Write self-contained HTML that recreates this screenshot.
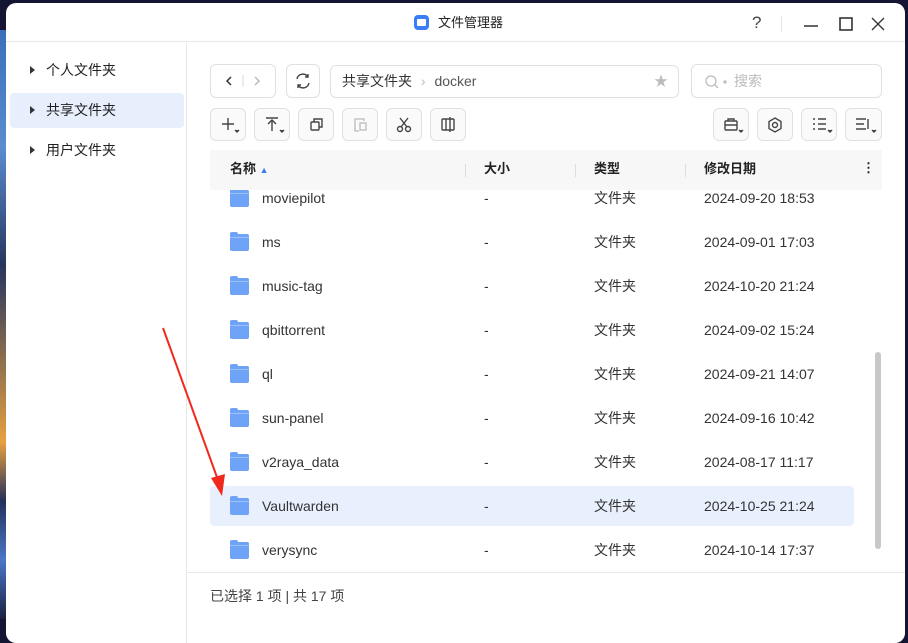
<!DOCTYPE html>
<html><head><meta charset="utf-8"><style>
*{box-sizing:border-box;margin:0;padding:0}
body{width:908px;height:619px;overflow:hidden;background:#141433;font-family:"Liberation Sans","Noto Sans CJK SC",sans-serif;position:relative}
.strip{position:absolute;left:0;top:30px;width:8px;height:589px;background:linear-gradient(#3a6fb8,#5a8ccf 20%,#27355e 40%,#e6a040 70%,#24305a 80%,#4a78c8 90%,#1a2040)}
.win{position:absolute;left:6px;top:3px;width:899px;height:640px;background:#fff;border-radius:10px;overflow:hidden}
.title{height:39px;border-bottom:1px solid #e8e8e8;position:relative}
.title .t{position:absolute;left:432px;top:12px;font-size:13px;line-height:16px;color:#222}
.title .ic{position:absolute;left:408px;top:12px;width:15px;height:15px;background:#3a7df5;border-radius:4px}
.title .ic:after{content:"";position:absolute;left:3px;top:4px;width:9px;height:7px;background:#fff;border-radius:1px}
.side{position:absolute;left:0;top:40px;width:181px;bottom:0;border-right:1px solid #e8e8e8}
.si{position:absolute;left:4px;width:174px;height:35px;font-size:14px;color:#222;padding-left:36px;line-height:35px;border-radius:4px}
.si:before{content:"";position:absolute;left:20px;top:13px;border-left:5px solid #333;border-top:4px solid transparent;border-bottom:4px solid transparent}
.btn{position:absolute;border:1px solid #e0e0e0;border-radius:6px;background:#fff;color:#555;font-size:14px;text-align:center}
.tb{background:#fafafa;width:36px;height:33px;top:105px}
.tb svg{position:absolute;left:0;top:0}
.hdr{position:absolute;left:204px;top:147px;width:672px;height:40px;background:#f7f7f8;font-size:13px;font-weight:bold;color:#222}
.hdr span{position:absolute;top:11px;line-height:16px}
.sep{position:absolute;top:14px;width:1px;height:13px;background:#ddd}
.row{position:absolute;left:204px;width:644px;height:40px;font-size:14px;color:#333}
.row span{position:absolute;top:11px;line-height:18px}
.fold{position:absolute;left:20px;top:12px;width:19px;height:17px;background:#6fa3f7;border-radius:2px}
.fold:before{content:"";position:absolute;left:0;top:-2px;width:8px;height:4px;background:#6fa3f7;border-radius:2px 2px 0 0}
.fold:after{content:"";position:absolute;left:0;top:3px;width:19px;height:1px;background:#9cc2fb}
</style></head><body>
<div class="strip"></div>
<div class="win">
 <div class="title"><div class="ic"></div><div class="t">文件管理器</div>
  <div style="position:absolute;left:746px;top:11px;font-size:17px;line-height:18px;color:#444">?</div>
  <div style="position:absolute;left:775px;top:13px;width:1px;height:16px;background:#e6e6e6"></div>
  <svg style="position:absolute;left:790px;top:8px" width="100" height="26" fill="none" stroke="#333" stroke-width="1.6"><line x1="8" y1="15" x2="22" y2="15"/><rect x="44" y="7" width="12" height="12"/><path d="M76 7l12 12M88 7l-12 12" stroke-width="1.3"/></svg>
 </div>
 <div class="side">
  <div class="si" style="top:10px">个人文件夹</div>
  <div class="si" style="top:50px;background:#e7effd">共享文件夹</div>
  <div class="si" style="top:90px">用户文件夹</div>
 </div>
 <div class="btn" style="left:204px;top:61px;width:66px;height:34px"><svg width="64" height="32" fill="none" stroke-width="1.5"><path d="M20 12l-4 4 4 4" stroke="#333"/><line x1="32" y1="10" x2="32" y2="22" stroke="#e5e5e5"/><path d="M44 12l4 4-4 4" stroke="#bbb"/></svg></div>
 <div class="btn" style="left:280px;top:61px;width:34px;height:34px"><svg width="32" height="32" fill="none" stroke="#444" stroke-width="1.4"><path d="M10 14a6 6 0 0 1 11-2M22 18a6 6 0 0 1-11 2"/><path d="M21 9v3h-3M11 23v-3h3"/></svg></div>
 <div class="btn" style="left:324px;top:62px;width:349px;height:33px;font-size:14px;text-align:left;line-height:31px;padding-left:11px;color:#333">共享文件夹 <span style="color:#bbb;margin:0 5px">›</span> <span style="color:#555">docker</span><span style="position:absolute;right:10px;color:#bbb">★</span></div>
 <div class="btn" style="left:685px;top:61px;width:191px;height:34px;text-align:left;line-height:32px;padding-left:42px;color:#bbb"><svg style="position:absolute;left:12px;top:9px" width="26" height="16" fill="none" stroke="#bbb" stroke-width="1.3"><circle cx="7" cy="7" r="5"/><path d="M11 11l3 3"/><circle cx="21" cy="8" r="1" fill="#bbb"/></svg>搜索</div>
 <div class="btn tb" style="left:204px"><svg width="34" height="31" stroke="#444" stroke-width="1.4" fill="none"><path d="M17 9v12M11 15h12"/><path d="M24 21l2 2 2-2" fill="#444"/></svg></div>
 <div class="btn tb" style="left:248px"><svg width="34" height="31" stroke="#444" stroke-width="1.4" fill="none"><path d="M11 9h12M17 11v11M13 15l4-4 4 4"/><path d="M25 21l2 2 2-2" fill="#444"/></svg></div>
 <div class="btn tb" style="left:292px"><svg width="34" height="31" stroke="#444" stroke-width="1.4" fill="none"><rect x="12" y="13" width="8" height="8" rx="1"/><path d="M15 13v-3h8v8h-3"/></svg></div>
 <div class="btn tb" style="left:336px"><svg width="34" height="31" stroke="#bbb" stroke-width="1.3" fill="none"><path d="M21 12v-2h-9v12h4"/><rect x="17" y="14" width="6" height="7"/></svg></div>
 <div class="btn tb" style="left:380px"><svg width="34" height="31" stroke="#444" stroke-width="1.4" fill="none"><circle cx="13" cy="20" r="2.5"/><circle cx="21" cy="20" r="2.5"/><path d="M13 9l7 9M21 9l-7 9"/></svg></div>
 <div class="btn tb" style="left:424px"><svg width="34" height="31" stroke="#444" stroke-width="1.4" fill="none"><rect x="11" y="10" width="12" height="11" rx="1"/><path d="M15 10v11M19 8v15"/></svg></div>
 <div class="btn tb" style="left:707px"><svg width="34" height="31" stroke="#444" stroke-width="1.4" fill="none"><rect x="11" y="12" width="12" height="9" rx="1"/><path d="M14 12v-2h6v2M11 16h12"/><path d="M25 21l2 2 2-2" fill="#444"/></svg></div>
 <div class="btn tb" style="left:751px"><svg width="34" height="31" stroke="#444" stroke-width="1.4" fill="none"><path d="M17 9l6 3.5v7L17 23l-6-3.5v-7z"/><circle cx="17" cy="16" r="2.5"/></svg></div>
 <div class="btn tb" style="left:795px"><svg width="34" height="31" stroke="#444" stroke-width="1.4" fill="none"><path d="M11 10h2M11 15h2M11 20h2M16 10h8M16 15h8M16 20h8"/><path d="M26 21l2 2 2-2" fill="#444"/></svg></div>
 <div class="btn tb" style="left:839px;width:37px"><svg width="35" height="31" stroke="#444" stroke-width="1.4" fill="none"><path d="M10 10h10M10 15h8M10 20h10M22 10v10"/><path d="M26 21l2 2 2-2" fill="#444"/></svg></div>
 <div class="hdr"><span style="left:20px">名称 <span style="position:relative;top:0;color:#3a7df5;font-size:9px">▲</span></span><div class="sep" style="left:255px"></div><span style="left:274px">大小</span><div class="sep" style="left:365px"></div><span style="left:384px">类型</span><div class="sep" style="left:475px"></div><span style="left:494px">修改日期</span><span style="left:652px;top:10px">⋮</span></div>
 <div style="position:absolute;left:204px;top:187px;width:672px;height:382px;overflow:hidden">
 <div style="position:relative;top:-12px;left:-204px">
  <div class="row" style="top:0px"><div class="fold"></div><span style="left:52px">moviepilot</span><span style="left:274px">-</span><span style="left:384px">文件夹</span><span style="left:494px">2024-09-20 18:53</span></div>
  <div class="row" style="top:44px"><div class="fold"></div><span style="left:52px">ms</span><span style="left:274px">-</span><span style="left:384px">文件夹</span><span style="left:494px">2024-09-01 17:03</span></div>
  <div class="row" style="top:88px"><div class="fold"></div><span style="left:52px">music-tag</span><span style="left:274px">-</span><span style="left:384px">文件夹</span><span style="left:494px">2024-10-20 21:24</span></div>
  <div class="row" style="top:132px"><div class="fold"></div><span style="left:52px">qbittorrent</span><span style="left:274px">-</span><span style="left:384px">文件夹</span><span style="left:494px">2024-09-02 15:24</span></div>
  <div class="row" style="top:176px"><div class="fold"></div><span style="left:52px">ql</span><span style="left:274px">-</span><span style="left:384px">文件夹</span><span style="left:494px">2024-09-21 14:07</span></div>
  <div class="row" style="top:220px"><div class="fold"></div><span style="left:52px">sun-panel</span><span style="left:274px">-</span><span style="left:384px">文件夹</span><span style="left:494px">2024-09-16 10:42</span></div>
  <div class="row" style="top:264px"><div class="fold"></div><span style="left:52px">v2raya_data</span><span style="left:274px">-</span><span style="left:384px">文件夹</span><span style="left:494px">2024-08-17 11:17</span></div>
  <div class="row" style="top:308px;background:#e8f0fd;border-radius:4px"><div class="fold"></div><span style="left:52px">Vaultwarden</span><span style="left:274px">-</span><span style="left:384px">文件夹</span><span style="left:494px">2024-10-25 21:24</span></div>
  <div class="row" style="top:352px"><div class="fold"></div><span style="left:52px">verysync</span><span style="left:274px">-</span><span style="left:384px">文件夹</span><span style="left:494px">2024-10-14 17:37</span></div>
 </div></div>
 <div style="position:absolute;left:869px;top:349px;width:6px;height:197px;background:#c8c8c8;border-radius:3px"></div>
 <div style="position:absolute;left:181px;top:569px;width:718px;height:1px;background:#e8e8e8"></div>
 <div style="position:absolute;left:204px;top:584px;font-size:14px;line-height:18px;color:#444">已选择 1 项 | 共 17 项</div>
</div>
<svg style="position:absolute;left:0;top:0" width="908" height="619"><line x1="163" y1="328" x2="218" y2="480" stroke="#f0281e" stroke-width="2"/><polygon points="222,496 211,478 225,474" fill="#f0281e"/></svg>
</body></html>
